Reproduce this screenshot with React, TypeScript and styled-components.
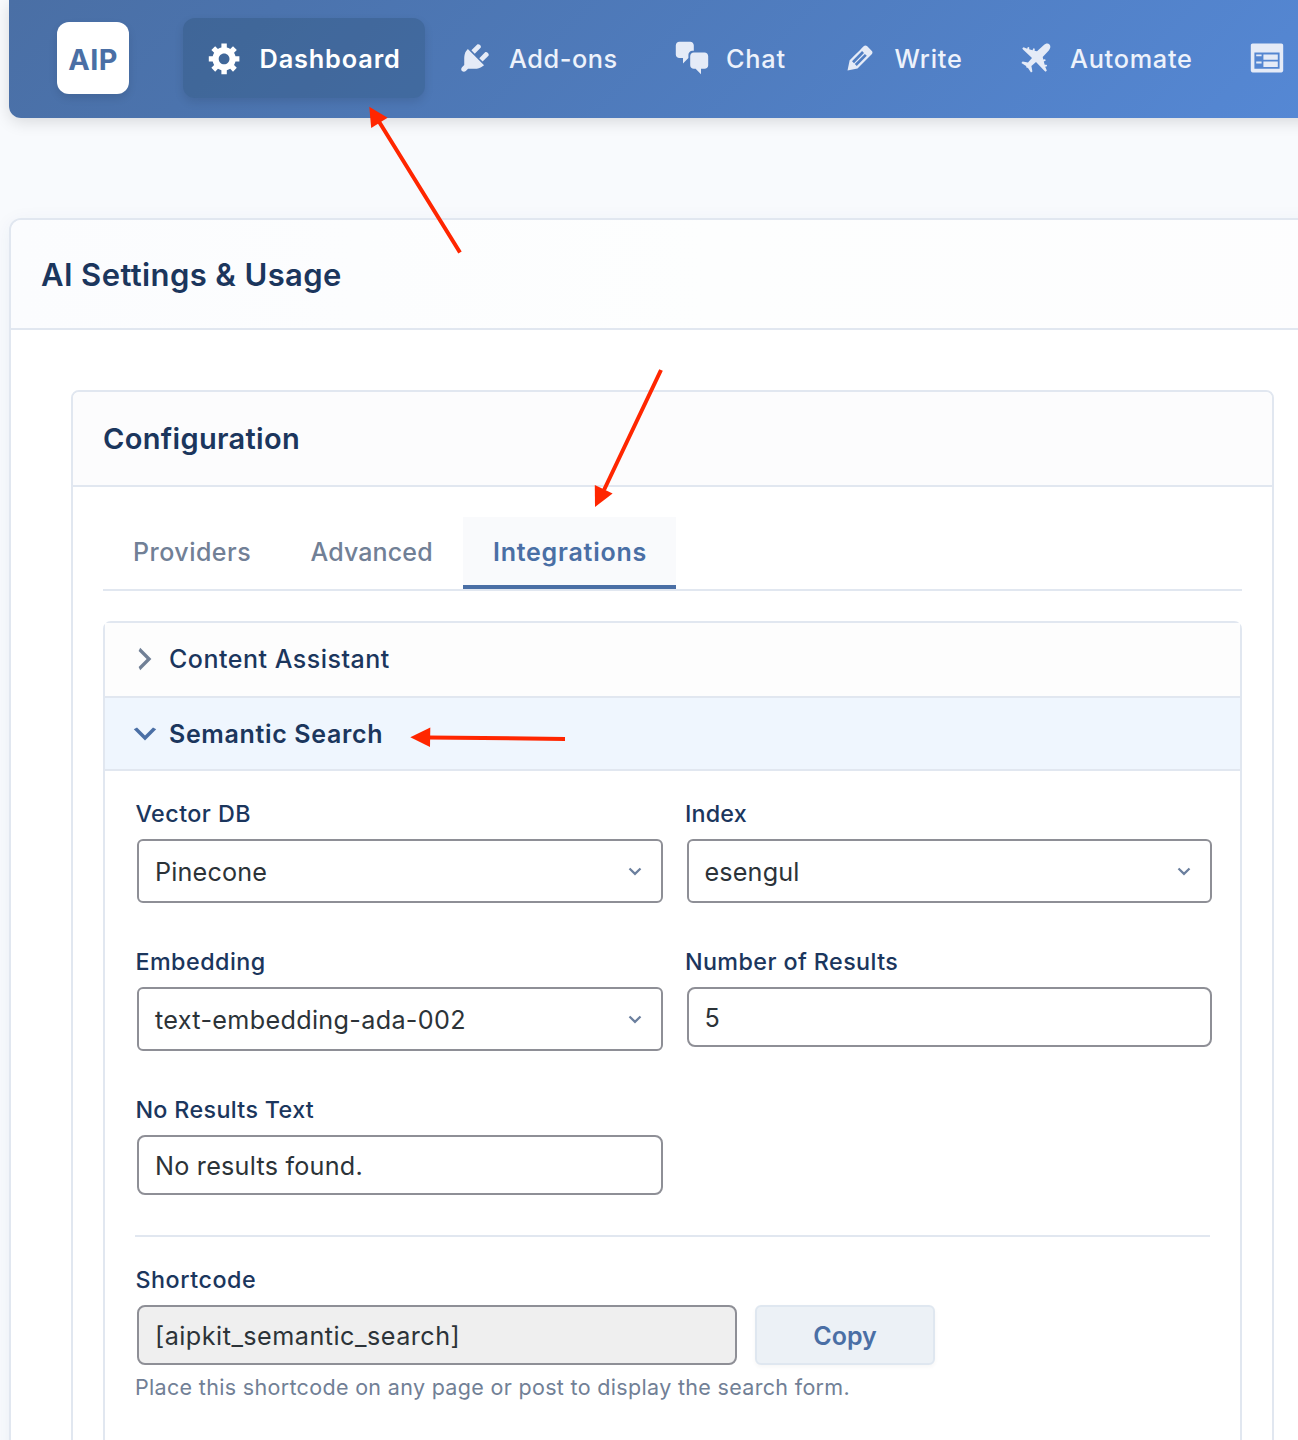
import React from 'react';
import styled, { createGlobalStyle } from 'styled-components';

const GlobalStyle = createGlobalStyle`
  *, *::before, *::after { box-sizing: border-box; }
  body {
    margin: 0;
    background: #f8fafd;
    font-family: Inter, "Liberation Sans", sans-serif;
    -webkit-font-smoothing: antialiased;
  }
`;

const navy = '#1b365d';
const blue = '#4a6fa5';
const slate = '#718096';
const line = '#e1e7f0';

const Page = styled.div`
  position: relative;
  width: 1298px;
  height: 1440px;
  padding-left: 9px;
  overflow: hidden;
  display: flex;
  flex-direction: column;
`;

/* ---------- top navigation ---------- */

const NavBar = styled.nav`
  flex: none;
  display: flex;
  align-items: flex-start;
  width: 1400px;
  height: 118px;
  padding: 18px 0 0 48px;
  border-radius: 0 0 0 12px;
  background: linear-gradient(135deg, #4a6fa5 0%, #4b73ad 18%, #5588d5 94%);
  box-shadow: 0 4px 16px rgba(0, 0, 0, 0.13);
`;

const Logo = styled.div<{ $track: number }>`
  display: flex;
  align-items: center;
  justify-content: center;
  width: 72px;
  height: 72px;
  margin: 4px 54px 0 0;
  padding-top: 3px;
  border-radius: 12px;
  background: #fff;
  box-shadow: 0 4px 8px rgba(0, 0, 0, 0.1);
  color: ${blue};
  font-size: 28.8px;
  font-weight: 700;
  letter-spacing: ${(p) => p.$track}px;
`;

const NavList = styled.div`
  display: flex;
  gap: 8px;
`;

const NavItem = styled.a<{ $active?: boolean; $width: number; $track: number }>`
  flex: none;
  display: flex;
  align-items: center;
  gap: 16px;
  width: ${(p) => p.$width}px;
  height: 80px;
  padding: 0 0 0 24px;
  border-radius: 12px;
  background: ${(p) => (p.$active ? 'rgba(31, 66, 96, 0.25)' : 'transparent')};
  box-shadow: ${(p) => (p.$active ? '0 4px 10px rgba(0, 0, 0, 0.1)' : 'none')};
  color: ${(p) => (p.$active ? '#fff' : '#edf2fb')};
  font-size: 25.3px;
  font-weight: ${(p) => (p.$active ? 600 : 500)};
  letter-spacing: ${(p) => p.$track}px;
  white-space: nowrap;

  svg {
    flex: none;
    fill: ${(p) => (p.$active ? '#fff' : '#e5ebf7')};
  }
`;

const NavText = styled.span`
  padding: 1px 0 0 0.5px;
`;

/* ---------- panels ---------- */

const Panel = styled.section`
  flex: none;
  width: 1400px;
  height: 1400px;
  margin-top: 100px;
  border: 2px solid ${line};
  border-radius: 12px;
  background: #fff;
  box-shadow: 0 4px 20px rgba(40, 70, 120, 0.06);
  overflow: hidden;
`;

const PanelHeader = styled.header`
  display: flex;
  align-items: center;
  height: 110px;
  padding: 1px 30px 0;
  border-bottom: 2px solid ${line};
  background: linear-gradient(90deg, #fbfcfe, #fdfefe 50%, #fdfdfe);
`;

const PanelTitle = styled.h1`
  margin: 0;
  color: ${navy};
  font-size: 31px;
  font-weight: 600;
  letter-spacing: 0.39px;
`;

const Card = styled.section`
  width: 1203px;
  height: 1200px;
  margin: 60px 0 0 60px;
  border: 2px solid ${line};
  border-radius: 8px;
  overflow: hidden;
`;

const CardHeader = styled.header`
  display: flex;
  align-items: center;
  height: 95px;
  padding: 0 30px 0;
  border-bottom: 2px solid ${line};
  background: #fcfcfd;
`;

const CardTitle = styled.h2`
  margin: 0;
  color: ${navy};
  font-size: 29px;
  font-weight: 600;
  letter-spacing: 0.327px;
`;

const CardBody = styled.div`
  padding: 30px;
`;

const Tabs = styled.div`
  display: flex;
  height: 74px;
  border-bottom: 2px solid ${line};
`;

const Tab = styled.a<{ $active?: boolean; $width: number; $track: number }>`
  display: flex;
  align-items: center;
  width: ${(p) => p.$width}px;
  height: 72px;
  padding: 2px 0 0 30px;
  border-bottom: 4px solid ${(p) => (p.$active ? blue : 'transparent')};
  background: ${(p) => (p.$active ? '#f9fafc' : 'transparent')};
  color: ${(p) => (p.$active ? blue : slate)};
  font-size: 25px;
  font-weight: ${(p) => (p.$active ? 600 : 500)};
  letter-spacing: ${(p) => p.$track}px;
`;

/* ---------- accordion ---------- */

const Accordion = styled.div`
  height: 900px;
  margin-top: 30px;
  border: 2px solid ${line};
  border-radius: 8px;
`;

const AccordionHeader = styled.div<{ $open?: boolean; $height: number; $track: number }>`
  display: flex;
  align-items: center;
  gap: 8px;
  height: ${(p) => p.$height}px;
  padding: 0 0 ${(p) => (p.$open ? 0 : 2)}px 24px;
  border-bottom: 2px solid ${line};
  background: ${(p) => (p.$open ? '#eff6fe' : '#fdfdfd')};
  color: ${navy};
  font-size: 25px;
  font-weight: ${(p) => (p.$open ? 600 : 500)};
  letter-spacing: ${(p) => p.$track}px;

  svg {
    fill: ${(p) => (p.$open ? blue : slate)};
  }
`;

/* ---------- form ---------- */

const Form = styled.div`
  padding: 28px 30px 0;
`;

const FieldGrid = styled.div`
  display: grid;
  grid-template-columns: 1fr 1fr;
  grid-auto-rows: 104px;
  gap: 44px 24px;
`;

const Field = styled.div`
  display: flex;
  flex-direction: column;
`;

const Label = styled.label<{ $track: number }>`
  height: 30px;
  margin-bottom: 10px;
  padding-left: 0.4px;
  color: ${navy};
  font-size: 23.3px;
  font-weight: 500;
  line-height: 30px;
  letter-spacing: ${(p) => p.$track}px;
`;

const Control = styled.div<{ $tall?: boolean; $track: number; $readonly?: boolean }>`
  flex: none;
  display: flex;
  align-items: center;
  justify-content: space-between;
  width: ${(p) => (p.$readonly ? '600px' : '100%')};
  height: ${(p) => (p.$tall ? 64 : 60)}px;
  margin-left: 2px;
  padding: 1px 19px 0 16px;
  border: 2px solid #8e8f96;
  border-radius: ${(p) => (p.$tall ? 6 : 8)}px;
  background: ${(p) => (p.$readonly ? '#efefef' : '#fff')};
  color: #2c3338;
  font-size: 25.2px;
  letter-spacing: ${(p) => p.$track}px;
  white-space: nowrap;
`;

const Divider = styled.hr`
  height: 2px;
  margin: 36px 0 28px;
  border: 0;
  background: ${line};
`;

const CopyRow = styled.div`
  display: flex;
  gap: 18px;
`;

const CopyButton = styled.button`
  width: 180px;
  height: 60px;
  padding: 1px 0 0;
  border: 2px solid #dfe7f0;
  border-radius: 6px;
  background: #ecf1f6;
  box-shadow: 0 2px 4px rgba(0, 0, 0, 0.04);
  color: ${blue};
  font: 600 25px Inter, "Liberation Sans", sans-serif;
`;

const Help = styled.p`
  margin: 7px 0 0;
  color: ${slate};
  font-size: 21.5px;
  line-height: 30px;
  letter-spacing: 0.324px;
  white-space: nowrap;
`;

const Annotations = styled.svg`
  position: absolute;
  top: 0;
  left: 0;
  pointer-events: none;
`;

/* ---------- icons ---------- */

const icons = {
  gear: 'M18 12h-2.18c-.17.7-.44 1.35-.81 1.93l1.54 1.54-2.1 2.1-1.54-1.54c-.58.36-1.23.63-1.91.79V19H8v-2.18c-.68-.16-1.33-.43-1.91-.79l-1.54 1.54-2.12-2.12 1.54-1.54c-.36-.58-.63-1.23-.79-1.91H1V9.03h2.17c.16-.7.44-1.35.8-1.94L2.43 5.55l2.1-2.1 1.54 1.54c.58-.37 1.24-.64 1.93-.81V2h3v2.18c.68.16 1.33.43 1.91.79l1.54-1.54 2.12 2.12-1.54 1.54c.36.59.64 1.24.8 1.94H18V12zm-8.5 1.5c1.66 0 3-1.34 3-3s-1.34-3-3-3-3 1.34-3 3 1.34 3 3 3z',
  plug: 'M13.11 4.36L9.87 7.6 8 5.73l3.24-3.24c.35-.34 1.05-.2 1.56.32.52.51.66 1.21.31 1.55zm-8 1.77l.91-1.12 9.01 9.01-1.19.84c-.71.71-2.63 1.16-3.82 1.16H6.14L4.9 17.26c-.59.59-1.54.59-2.12 0-.59-.58-.59-1.53 0-2.12l1.24-1.24v-3.88c0-1.13.4-3.19 1.09-3.89zm7.26 3.97l3.24-3.24c.34-.35 1.04-.21 1.55.31.52.51.66 1.21.31 1.55l-3.24 3.25z',
  chat: 'M11 6h-.82C9.07 6 8 7.2 8 8.16V10l-3 3v-3H3c-1.1 0-2-.9-2-2V3c0-1.1.9-2 2-2h6c1.1 0 2 .9 2 2v3zm0 1h6c1.1 0 2 .9 2 2v5c0 1.1-.9 2-2 2h-2v3l-3-3h-1c-1.1 0-2-.9-2-2V9c0-1.1.9-2 2-2z',
  pencil: 'M13.89 3.39l2.71 2.72c.46.46.42 1.24.03 1.64l-8.01 8.02-5.56 1.16 1.16-5.58s7.6-7.63 7.99-8.03c.39-.39 1.22-.39 1.68.07zm-2.73 2.79l-5.59 5.61 1.11 1.11 5.54-5.65zm-2.97 8.23l5.58-5.6-1.07-1.08-5.59 5.6z',
  form: 'M2 2h16c.55 0 1 .45 1 1v14c0 .55-.45 1-1 1H2c-.55 0-1-.45-1-1V3c0-.55.45-1 1-1zm15 14V7H3v9h14zM4 8v1h3V8H4zm4 0v3h8V8H8zm-4 4v1h3v-1H4zm4 0v3h8v-3H8z',
  right: 'M6 15l5-5-5-5 1-2 7 7-7 7z',
  down: 'M5 6l5 5 5-5 2 1-7 7-7-7z',
};

const Icon = ({ d, size = 36 }: { d: string; size?: number }) => (
  <svg width={size} height={size} viewBox="0 0 20 20">
    <path fillRule="evenodd" d={d} />
  </svg>
);

const Airplane = () => (
  <svg width="36" height="36" viewBox="0 0 36 36">
    <path d="M31.5 4.5C30.2 3.1 27.6 3.4 25.6 5.2L19 11.3L16.6 10.7L16.8 9.1C16.3 8 15.3 8 14.9 9.2L14.6 10.2L11.2 9.3L11.3 7.6C10.8 6.6 9.8 6.7 9.4 7.7L9.2 8.8L5.6 7.2L4.3 8.2L5 9.4L14 18L10 22.6L4.6 21.6L3.4 23L8.1 26L8.4 27.6L10 27.9L13 32.6L14.4 31.4L13.4 26L18 22L26.6 31L27.8 31.7L28.8 30.4L27.2 26.8L28.3 26.6C29.3 26.2 29.4 25.2 28.4 24.7L26.7 24.8L25.8 21.4L26.8 21.1C28 20.7 28 19.7 26.9 19.2L25.3 19.4L24.7 17L30.8 10.4C32.6 8.4 32.9 5.8 31.5 4.5Z" />
  </svg>
);

const Caret = () => (
  <svg width="14" height="10" viewBox="0 0 14 10">
    <path d="M1.5 1.5L7 6.9L12.5 1.5" fill="none" stroke="#6b7f9e" strokeWidth="2.2" />
  </svg>
);

export default function App() {
  return (
    <Page>
      <GlobalStyle />
      <NavBar>
        <Logo $track={0.35}>AIP</Logo>
        <NavList>
          <NavItem $active $width={241.5} $track={0.86}><Icon d={icons.gear} /><NavText>Dashboard</NavText></NavItem>
          <NavItem $width={209} $track={0.55}><Icon d={icons.plug} /><NavText>Add-ons</NavText></NavItem>
          <NavItem $width={160.5} $track={0.79}><Icon d={icons.chat} /><NavText>Chat</NavText></NavItem>
          <NavItem $width={167.5} $track={0.78}><Icon d={icons.pencil} /><NavText>Write</NavText></NavItem>
          <NavItem $width={223} $track={0.72}><Airplane /><NavText>Automate</NavText></NavItem>
          <NavItem $width={100} $track={0}><Icon d={icons.form} /></NavItem>
        </NavList>
      </NavBar>

      <Panel>
        <PanelHeader><PanelTitle>AI Settings &amp; Usage</PanelTitle></PanelHeader>
        <Card>
          <CardHeader><CardTitle>Configuration</CardTitle></CardHeader>
          <CardBody>
            <Tabs>
              <Tab $width={177.5} $track={0.48}>Providers</Tab>
              <Tab $width={182.5} $track={0.14}>Advanced</Tab>
              <Tab $active $width={213} $track={0.76}>Integrations</Tab>
            </Tabs>
            <Accordion>
              <AccordionHeader $height={75} $track={0.5}>
                <Icon d={icons.right} size={32} />Content Assistant
              </AccordionHeader>
              <AccordionHeader $open $height={73} $track={0.66}>
                <Icon d={icons.down} size={32} />Semantic Search
              </AccordionHeader>
              <Form>
                <FieldGrid>
                  <Field>
                    <Label $track={0.45}>Vector DB</Label>
                    <Control $tall $track={0.16}>Pinecone<Caret /></Control>
                  </Field>
                  <Field>
                    <Label $track={0.2}>Index</Label>
                    <Control $tall $track={0.15}>esengul<Caret /></Control>
                  </Field>
                  <Field>
                    <Label $track={0.48}>Embedding</Label>
                    <Control $tall $track={0.32}>text-embedding-ada-002<Caret /></Control>
                  </Field>
                  <Field>
                    <Label $track={0.42}>Number of Results</Label>
                    <Control $track={0}>5</Control>
                  </Field>
                  <Field>
                    <Label $track={0.35}>No Results Text</Label>
                    <Control $track={0.23}>No results found.</Control>
                  </Field>
                </FieldGrid>
                <Divider />
                <Field>
                  <Label $track={0.55}>Shortcode</Label>
                  <CopyRow>
                    <Control $readonly $track={0.48}>[aipkit_semantic_search]</Control>
                    <CopyButton>Copy</CopyButton>
                  </CopyRow>
                  <Help>Place this shortcode on any page or post to display the search form.</Help>
                </Field>
              </Form>
            </Accordion>
          </CardBody>
        </Card>
      </Panel>

      <Annotations width="1298" height="1440" viewBox="0 0 1298 1440" fill="#ff2600" stroke="#ff2600">
        <path d="M378 120L460 252.5M604 490L661 370M428 737.4L565 739" strokeWidth="4" fill="none" />
        <path stroke="none" d="M369.3 106.7L387.6 117.8L371.2 128Z" />
        <path stroke="none" d="M595 507L594.8 485L612.6 493.4Z" />
        <path stroke="none" d="M410.3 737.2L430.3 727.5L430 747Z" />
      </Annotations>
    </Page>
  );
}
